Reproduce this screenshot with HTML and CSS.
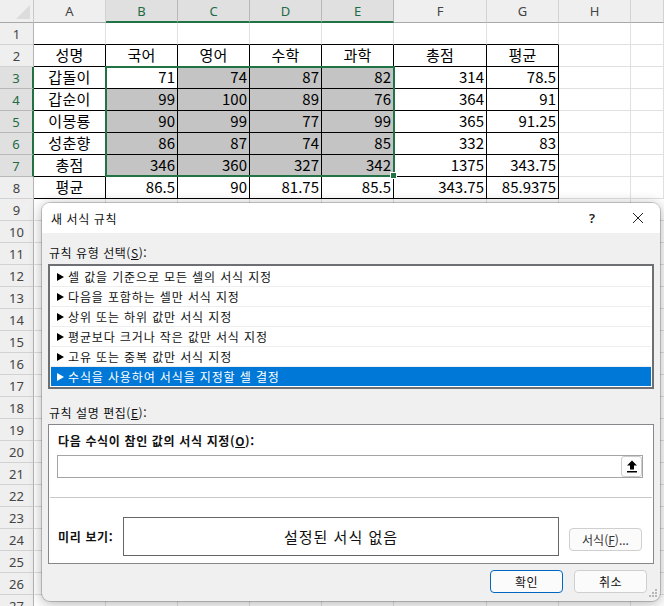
FILE: index.html
```html
<!DOCTYPE html>
<html lang="ko">
<head>
<meta charset="utf-8">
<title>새 서식 규칙</title>
<link rel="stylesheet" href="styles.css">
</head>
<body>
<div class="app">
  <div class="sheet">
    <div class="corner"><span class="corner-tri"></span></div>
    <div class="ch">A</div><div class="ch on">B</div><div class="ch on">C</div><div class="ch on">D</div><div class="ch on">E</div><div class="ch">F</div><div class="ch">G</div><div class="ch">H</div><div class="ch"></div>

    <div class="rh">1</div>
    <div class="c tb"></div><div class="c tb"></div><div class="c tb"></div><div class="c tb"></div><div class="c tb"></div><div class="c tb"></div><div class="c tb"></div><div class="c"></div><div class="c"></div>

    <div class="rh">2</div>
    <div class="c t ctr">성명</div><div class="c t ctr">국어</div><div class="c t ctr">영어</div><div class="c t ctr">수학</div><div class="c t ctr">과학</div><div class="c t ctr">총점</div><div class="c t ctr">평균</div><div class="c"></div><div class="c"></div>

    <div class="rh on">3</div>
    <div class="c t ctr">갑돌이</div><div class="c t num">71</div><div class="c t num g">74</div><div class="c t num g">87</div><div class="c t num g">82</div><div class="c t num">314</div><div class="c t num">78.5</div><div class="c"></div><div class="c"></div>

    <div class="rh on">4</div>
    <div class="c t ctr">갑순이</div><div class="c t num g">99</div><div class="c t num g">100</div><div class="c t num g">89</div><div class="c t num g">76</div><div class="c t num">364</div><div class="c t num">91</div><div class="c"></div><div class="c"></div>

    <div class="rh on">5</div>
    <div class="c t ctr">이몽룡</div><div class="c t num g">90</div><div class="c t num g">99</div><div class="c t num g">77</div><div class="c t num g">99</div><div class="c t num">365</div><div class="c t num">91.25</div><div class="c"></div><div class="c"></div>

    <div class="rh on">6</div>
    <div class="c t ctr">성춘향</div><div class="c t num g">86</div><div class="c t num g">87</div><div class="c t num g">74</div><div class="c t num g">85</div><div class="c t num">332</div><div class="c t num">83</div><div class="c"></div><div class="c"></div>

    <div class="rh on">7</div>
    <div class="c t ctr">총점</div><div class="c t num g">346</div><div class="c t num g">360</div><div class="c t num g">327</div><div class="c t num g">342</div><div class="c t num">1375</div><div class="c t num">343.75</div><div class="c"></div><div class="c"></div>

    <div class="rh">8</div>
    <div class="c t ctr">평균</div><div class="c t num">86.5</div><div class="c t num">90</div><div class="c t num">81.75</div><div class="c t num">85.5</div><div class="c t num">343.75</div><div class="c t num">85.9375</div><div class="c"></div><div class="c"></div>

    <div class="selection"><span class="handle"></span></div>

    <div class="rh">9</div><div class="rh">10</div><div class="rh">11</div><div class="rh">12</div><div class="rh">13</div><div class="rh">14</div><div class="rh">15</div><div class="rh">16</div><div class="rh">17</div><div class="rh">18</div><div class="rh">19</div><div class="rh">20</div><div class="rh">21</div><div class="rh">22</div><div class="rh">23</div><div class="rh">24</div><div class="rh">25</div><div class="rh">26</div><div class="rh">27</div>
    <div class="blank"></div>
  </div>

  <div class="dialog">
    <div class="titlebar">
      <span class="title">새 서식 규칙</span>
      <span class="help">?</span>
      <svg class="close" width="12" height="12" viewBox="0 0 12 12"><path d="M1 1 L11 11 M11 1 L1 11" stroke="#222" stroke-width="1" fill="none"/></svg>
    </div>
    <div class="body">
      <div class="label first">규칙 유형 선택(<u>S</u>):</div>
      <ul class="rules">
        <li>셀 값을 기준으로 모든 셀의 서식 지정</li>
        <li>다음을 포함하는 셀만 서식 지정</li>
        <li>상위 또는 하위 값만 서식 지정</li>
        <li>평균보다 크거나 작은 값만 서식 지정</li>
        <li>고유 또는 중복 값만 서식 지정</li>
        <li class="sel">수식을 사용하여 서식을 지정할 셀 결정</li>
      </ul>
      <div class="label second">규칙 설명 편집(<u>E</u>):</div>
      <div class="desc">
        <div class="desc-top">
          <div class="bold">다음 수식이 참인 값의 서식 지정(<u>O</u>):</div>
          <div class="input">
            <span class="up"><svg width="12" height="13" viewBox="0 0 12 13"><path d="M6 0.5 L11 5.5 L8 5.5 L8 9.5 L4 9.5 L4 5.5 L1 5.5 Z M1 11 H11 V12.5 H1 Z" fill="#000"/></svg></span>
          </div>
        </div>
        <div class="desc-bottom">
          <span class="bold">미리 보기:</span>
          <div class="preview">설정된 서식 없음</div>
          <button class="btn fmt">서식(<u>F</u>)...</button>
        </div>
      </div>
      <div class="actions">
        <button class="btn act primary">확인</button>
        <button class="btn act">취소</button>
      </div>
    </div>
    <svg class="grip" width="11" height="11" viewBox="0 0 11 11"><path d="M8 0h2v2H8z M5 3h2v2H5z M8 3h2v2H8z M2 6h2v2H2z M5 6h2v2H5z M8 6h2v2H8z" fill="#b8b8b8"/></svg>
  </div>
</div>
</body>
</html>
```
FILE: styles.css
```css
* { box-sizing: border-box; }
html, body { margin: 0; padding: 0; background: #fff; }
body { font-family: "Noto Sans CJK KR", "Open Sans", sans-serif; color: #000; }
.app { position: relative; width: 664px; height: 606px; overflow: hidden; }

.sheet {
  display: grid;
  grid-template-columns: 34px 72px 72px 72px 72px 72px 93px 72px 72px 33px;
  grid-template-rows: 23px;
  grid-auto-rows: 22px;
  width: 664px;
  position: relative;
}
.corner { background: #efefef; border-right: 1px solid #c8c8c8; border-bottom: 1px solid #a8a8a8; position: relative; }
.corner-tri { position: absolute; right: 3px; bottom: 3px; width: 0; height: 0; border-left: 14px solid transparent; border-bottom: 14px solid #dcdcdc; }
.ch {
  background: #efefef;
  border-right: 1px solid #d2d2d2;
  border-bottom: 1px solid #a8a8a8;
  display: flex; align-items: center; justify-content: center;
  font: 13px "Noto Sans", sans-serif;
  color: #444;
}
.ch.on { background: #e0e0e0; color: #1e6b45; border-bottom: 2px solid #217346; border-right-color: #b8b8b8; }
.rh {
  background: #efefef;
  border-right: 1px solid #b4b4b4;
  border-bottom: 1px solid #d2d2d2;
  display: flex; align-items: center; justify-content: center;
  padding-top: 1px;
  font: 13px "Noto Sans", sans-serif;
  color: #444;
  grid-column: 1;
}
.rh.on { background: #e0e0e0; color: #1e6b45; border-right: 2px solid #217346; border-bottom-color: #b8b8b8; }
.c {
  background: #fff;
  border-right: 1px solid #e0e0e0;
  border-bottom: 1px solid #e0e0e0;
  font-size: 15px;
  line-height: 20px;
  white-space: nowrap;
  overflow: hidden;
}
.c.tb { border-bottom-color: #000; }
.c.t { border-right-color: #000; border-bottom-color: #000; }
.ctr { text-align: center; letter-spacing: .3px; }
.num { text-align: right; padding-right: 2px; }
.g { background: #c4c4c4; }

.selection {
  position: absolute;
  grid-column: 3 / 7;
  grid-row: 4 / 9;
  top: -1px; left: -1px; right: -1px; bottom: 0;
  border: 2px solid #217346;
  pointer-events: none;
}
.handle {
  position: absolute; right: -4px; bottom: -4px;
  box-sizing: content-box;
  width: 5px; height: 5px;
  background: #217346;
  border: 1px solid #fff;
}
.blank {
  grid-column: 2 / -1;
  grid-row: 10 / 29;
  background-color: #fff;
  background-image:
    repeating-linear-gradient(to bottom, transparent 0 21px, #e0e0e0 21px 22px),
    linear-gradient(to right, transparent 71px, #e0e0e0 71px 72px, transparent 72px 143px, #e0e0e0 143px 144px, transparent 144px 215px, #e0e0e0 215px 216px, transparent 216px 287px, #e0e0e0 287px 288px, transparent 288px 359px, #e0e0e0 359px 360px, transparent 360px 452px, #e0e0e0 452px 453px, transparent 453px 524px, #e0e0e0 524px 525px, transparent 525px 596px, #e0e0e0 596px 597px, transparent 597px);
}

.dialog {
  position: absolute;
  left: 42px; top: 203px;
  width: 618px; height: 398px;
  background: #f0f0f0;
  border-radius: 8px;
  box-shadow: 0 0 0 1px rgba(0,0,0,.18), 0 2px 14px rgba(0,0,0,.32);
  overflow: hidden;
  font-size: 12px;
}
.titlebar {
  height: 30px;
  background: #fff;
  display: flex;
  align-items: center;
  padding-left: 9px;
}
.title { flex: 1; letter-spacing: .6px; color: #111; }
.help { font: 600 13px "Noto Sans", sans-serif; margin-right: 37px; color: #222; }
.close { margin-right: 16px; }
.body { padding: 0 6px; }
.label { line-height: 16px; letter-spacing: .55px; color: #111; }
.label.first { margin: 12px 0 3px 1px; }
.label.second { margin: 16px 0 3px 1px; }
.rules {
  list-style: none;
  margin: 0;
  padding: 1px;
  width: 606px;
  height: 125px;
  background: #fff;
  border: 2px solid #6d6f73;
}
.rules li {
  height: 20px;
  line-height: 18px;
  padding-left: 6px;
  border-bottom: 1px solid #eee;
  letter-spacing: .87px;
  color: #111;
  display: flex;
  align-items: center;
  gap: 4px;
}
.rules li::before { content: ""; width: 0; height: 0; border-left: 7px solid #000; border-top: 4px solid transparent; border-bottom: 4px solid transparent; }
.rules li.sel { background: #0078d7; color: #fff; border-bottom: 0; height: 19px; }
.rules li.sel::before { border-left-color: #fff; }
.desc {
  width: 606px;
  height: 140px;
  background: #fff;
  border: 1px solid #85878b;
  padding: 0 1px;
}
.desc-top { height: 73px; padding: 7px 7px 0 7px; border-bottom: 1px solid #c8c8c8; }
.bold { font-weight: 700; letter-spacing: .65px; color: #111; line-height: 17px; padding-left: 1px; }
.input {
  margin-top: 6px;
  width: 586px;
  height: 23px;
  border: 1px solid #a4a4a4;
  background: #fff;
  display: flex;
  justify-content: flex-end;
  align-items: center;
}
.up {
  width: 21px; height: 21px;
  border: 1px solid #ccc;
  border-radius: 3px;
  background: #fdfdfd;
  display: flex; align-items: center; justify-content: center;
}
.desc-bottom { display: flex; align-items: center; height: 65px; padding: 11px 0 0 7px; }
.desc-bottom .bold { width: 66px; flex: none; }
.preview {
  width: 436px; height: 39px;
  border: 1px solid #666;
  display: flex; align-items: center; justify-content: center;
  font-size: 15px;
  letter-spacing: 1px;
  color: #111;
}
.btn {
  font: 12px "Noto Sans CJK KR", sans-serif;
  height: 23px;
  padding: 0;
  background: #fbfbfb;
  border: 1px solid #cfcfcf;
  border-radius: 4px;
  color: #111;
}
.fmt { width: 73px; margin-left: 10px; margin-top: 7px; color: #333; }
.actions { display: flex; justify-content: flex-end; gap: 11px; margin-top: 6px; padding-right: 7px; }
.act { width: 73px; letter-spacing: .5px; }
.primary { border-color: #0067c0; }
.grip { position: absolute; right: 2px; bottom: 1px; }
```
